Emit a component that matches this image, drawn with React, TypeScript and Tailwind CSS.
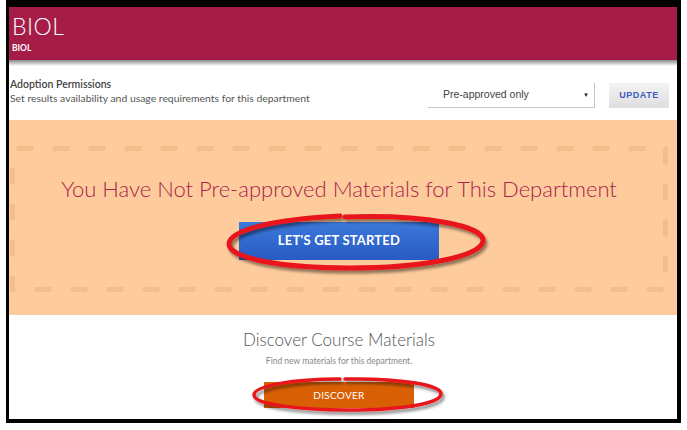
import React from "react";

const sans = "font-['Lato','Open_Sans',sans-serif]";

function Annotations() {
  return (
    <svg className="absolute left-0 top-0 pointer-events-none" width={687} height={430} viewBox="0 0 687 430">
      <defs>
        <filter id="shade" x="-10%" y="-30%" width="120%" height="160%">
          <feDropShadow dx="2" dy="3" stdDeviation="1.6" floodColor="#000" floodOpacity="0.45" />
        </filter>
      </defs>
      <g filter="url(#shade)" fill="none" stroke="#e8141a" strokeLinecap="round">
        <path
          d="M345 217 C 425 214 485 226 483 241 C 481 257 420 268 350 268 C 280 268 229 258 229 244 C 229 230 275 219 340 216"
          strokeWidth={5}
        />
        <path
          d="M345 379 C 400 378 442 385 441 394 C 440 404 400 410 348 410 C 296 410 254 404 254 395 C 254 386 292 379 340 379"
          strokeWidth={3.5}
        />
      </g>
    </svg>
  );
}

export default function App() {
  return (
    <div className={`relative w-[687px] h-[430px] bg-white overflow-hidden ${sans}`}>
      <div className="ml-[6px] w-[675px] h-[423px] border-black border-t-[7px] border-l-[3px] border-r-[4px] border-b-[4px] flex flex-col overflow-hidden">
        {/* Header */}
        <div className="h-[53px] bg-[#a61c48] pl-[3px] pt-[7px] text-white">
          <div className="text-[23px] leading-[25px] font-light tracking-[0.5px]">BIOL</div>
          <div className="mt-[5px] text-[8.5px] leading-[9px] font-bold">BIOL</div>
        </div>
        <div className="h-[6px] bg-gradient-to-b from-[#8a8a8a] to-white" />

        {/* Permissions */}
        <div className="h-[54px] flex items-start pl-[1px] pr-[8px]">
          <div className="pt-[11px] flex-1">
            <div className="text-[10.5px] leading-[14px] text-[#444] font-semibold">Adoption Permissions</div>
            <div className="text-[10.4px] leading-[14px] text-[#555]">
              Set results availability and usage requirements for this department
            </div>
          </div>
          <div className="mt-[17px] flex items-center">
            <div className="w-[167px] h-[25px] border-b border-r border-[#c8c8c8] flex items-center justify-between pl-[15px] pr-[5px] font-['Liberation_Sans',sans-serif] text-[10.5px] text-[#444]">
              <span>Pre-approved only</span>
              <span className="text-[6px] text-[#222]">▼</span>
            </div>
            <button className="ml-[14px] w-[60px] h-[25px] bg-gradient-to-b from-[#f4f4f4] to-[#dedede] text-[9px] font-bold tracking-[0.5px] text-[#3b5cc2] font-['Liberation_Sans',sans-serif]">
              UPDATE
            </button>
          </div>
        </div>

        {/* Empty state */}
        <div className="h-[195px] bg-[#fecc9c] pt-[26px] pb-[23px] pl-[1px] pr-[9px]">
          <div className="relative h-full flex flex-col items-center">
            <svg className="absolute inset-0" width="100%" height="100%" preserveAspectRatio="none">
              <rect
                x="2.5"
                y="2.5"
                width="calc(100% - 5px)"
                height="calc(100% - 5px)"
                fill="none"
                stroke="#f2be8c"
                strokeWidth={5}
                strokeDasharray="17 19"
                strokeDashoffset={-4}
              />
            </svg>
            <div className="relative mt-[29px] text-[22px] leading-[28px] font-light text-[#a8234c]">
              You Have Not Pre-approved Materials for This Department
            </div>
            <button className="relative mt-[19px] w-[200px] h-[38px] bg-gradient-to-b from-[#3c78da] to-[#285bc3] text-white text-[13px] font-bold tracking-[0.2px]">
              LET'S GET STARTED
            </button>
          </div>
        </div>

        {/* Discover */}
        <div className="flex-1 flex flex-col items-center pr-[8px] pt-[14px]">
          <div className="text-[17px] leading-[22px] font-light text-[#555]">Discover Course Materials</div>
          <div className="mt-[4px] text-[8.5px] leading-[12px] text-[#888]">Find new materials for this department.</div>
          <button className="mt-[15px] w-[150px] h-[26px] bg-[#d95f04] text-white text-[10px] tracking-[0.3px]">
            DISCOVER
          </button>
        </div>
      </div>
      <Annotations />
    </div>
  );
}
